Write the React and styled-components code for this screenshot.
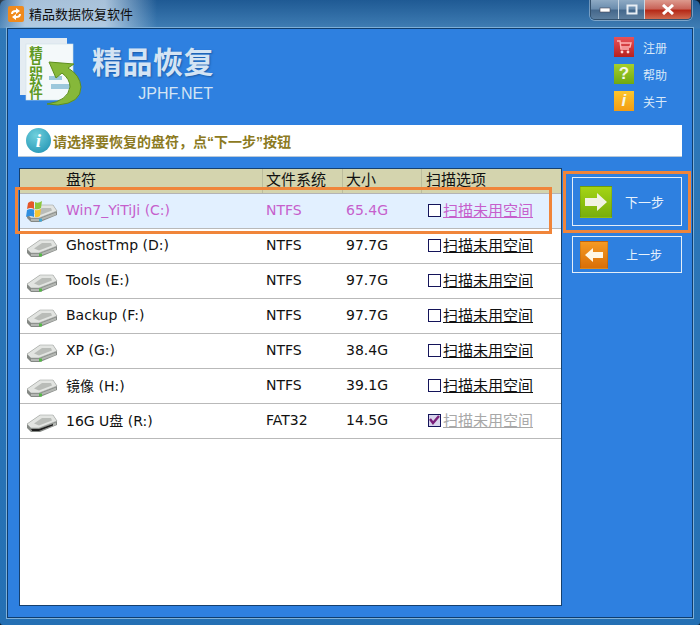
import React from 'react';
import styled, { createGlobalStyle } from 'styled-components';

const GlobalStyle = createGlobalStyle`
    html, body {
        margin: 0;
        padding: 0;
        background: #0b1c2c;
    }
    * {
        box-sizing: border-box;
    }
`;

const cjk = `"Noto Sans CJK SC", "Noto Sans", sans-serif`;
const latin = `"DejaVu Sans", "Noto Sans CJK SC", sans-serif`;

const drives = [
    { name: 'Win7_YiTiJi (C:)', fs: 'NTFS', size: '65.4G', kind: 'win', active: true },
    { name: 'GhostTmp (D:)', fs: 'NTFS', size: '97.7G' },
    { name: 'Tools (E:)', fs: 'NTFS', size: '97.7G' },
    { name: 'Backup (F:)', fs: 'NTFS', size: '97.7G' },
    { name: 'XP (G:)', fs: 'NTFS', size: '38.4G' },
    { name: '镜像 (H:)', fs: 'NTFS', size: '39.1G' },
    { name: '16G U盘 (R:)', fs: 'FAT32', size: '14.5G', kind: 'usb', disabled: true },
];

const DriveIcon = ({ kind }) => (
    <svg width="33" height="24" viewBox="0 0 33 24">
        <path d="M2 14 L15 5 L28 5 L32 11 L32 15 L15 22 L6 22 L2 18 Z" fill="#858985" />
        <path d="M2 14 L15 5 L28 5 L32 11 L14 18 L6 18 Z" fill="#e2e4e1" stroke="#a4a7a4" strokeWidth="0.6" />
        <path d="M9 13.5 L17 8 L26 8 L27 10.5 L14 15.5 Z" fill="#b9bcb8" />
        <path d="M6 19 L14 19 L31 12.5 L31 15 L14 21 L6 21 Z" fill="#b4b7b3" />
        {kind === 'usb'
            ? <path d="M6 19 L14 19 L28 14 L28 15.5 L14 21 L7 21 Z" fill="#1d1d1d" />
            : <rect x="14" y="18.5" width="3" height="3" fill={kind === 'win' ? '#3fa8d8' : '#55b848'} />}
        {kind === 'win' && (
            <g transform="translate(0 -3)">
                <path d="M3 6 Q6 3 9 5 L9 12 Q6 10 2 12 Z" fill="#e4572a" />
                <path d="M10 5 Q13 7 17 4 L16 11 Q13 13 10 12 Z" fill="#8cc63f" />
                <path d="M2 13 Q6 11 9 13 L9 20 Q5 18 1 20 Z" fill="#2f8fe0" />
                <path d="M10 13 Q13 14 16 12 L15 19 Q12 21 10 20 Z" fill="#f6c52f" />
            </g>
        )}
    </svg>
);

const Logo = () => (
    <svg width="66" height="70" viewBox="0 0 66 70">
        <rect x="2" y="1" width="47" height="57" fill="#e4ecf2" />
        <rect x="8" y="7" width="47" height="56" fill="#f4f9fa" stroke="#cfdfe8" strokeWidth="0.6" />
        <rect x="31" y="39" width="13" height="4" fill="#9cc8dc" />
        <rect x="33" y="47" width="20" height="5" fill="#9cc8dc" />
        <text x="18" y="9" writingMode="vertical-rl" fontFamily="Noto Sans CJK SC" fontWeight="700" fontSize="13.5" fill="#5f9a22">精品软件</text>
        <path d="M31 25 L56 27 L50 31 Q62 38 63 50 Q63 66 40 68 L29 67 Q50 64 52 50 Q52 42 44 36 L38 41 Z" fill="#86b83a" stroke="#5e8f1e" strokeWidth="1" />
    </svg>
);

export default () => {
    return (
        <Win>
            <GlobalStyle />
            <TitleBar>
                <TitleLeft>
                    <AppIcon>
                        <svg width="16" height="16" viewBox="0 0 16 16">
                            <path d="M3 8 Q3 4 8 4 L8 2 L12 5 L8 8 L8 6 Q5 6 5 8 Z" fill="#fff" />
                            <path d="M13 8 Q13 12 8 12 L8 14 L4 11 L8 8 L8 10 Q11 10 11 8 Z" fill="#fff" />
                        </svg>
                    </AppIcon>
                    <TitleText>精品数据恢复软件</TitleText>
                </TitleLeft>
                <WinButtons>
                    <WinBtn $w={28}>
                        <svg width="12" height="6" viewBox="0 0 12 6"><rect x="1" y="1" width="10" height="4" fill="#fff" stroke="#445" strokeWidth="0.6" /></svg>
                    </WinBtn>
                    <WinBtn $w={26}>
                        <svg width="12" height="11" viewBox="0 0 12 11"><rect x="1.5" y="1.5" width="9" height="8" fill="none" stroke="#e8eef4" strokeWidth="2" /></svg>
                    </WinBtn>
                    <WinBtn $w={46} $close>
                        <svg width="14" height="11" viewBox="0 0 14 11"><path d="M2 1 L12 10 M12 1 L2 10" stroke="#fff" strokeWidth="3" /></svg>
                    </WinBtn>
                </WinButtons>
            </TitleBar>
            <Panel>
                <Head>
                    <Logo />
                    <Brand>
                        <BrandName>精品恢复</BrandName>
                        <BrandUrl>JPHF.NET</BrandUrl>
                    </Brand>
                    <Links>
                        <LinkItem>
                            <LinkIcon $from="#e8525a" $to="#b8201f">
                                <svg width="16" height="14" viewBox="0 0 16 14"><path d="M1 1 L4 1 L5 9 L13 9 M4 3 L15 3 L14 7 L5 7" fill="none" stroke="#ffb4b4" strokeWidth="1.4" /><circle cx="6" cy="12" r="1.4" fill="#ffd9d9" /><circle cx="12" cy="12" r="1.4" fill="#ffd9d9" /></svg>
                            </LinkIcon>
                            注册
                        </LinkItem>
                        <LinkItem>
                            <LinkIcon $from="#a6d02c" $to="#6fa811">?</LinkIcon>
                            帮助
                        </LinkItem>
                        <LinkItem>
                            <LinkIcon $from="#fcc62c" $to="#f39c12"><i>i</i></LinkIcon>
                            关于
                        </LinkItem>
                    </Links>
                </Head>
                <Notice>
                    <InfoIcon>i</InfoIcon>
                    <NoticeText>请选择要恢复的盘符，点“下一步”按钮</NoticeText>
                </Notice>
                <Body>
                    <Table>
                        <HeadRow>
                            <NameCell $head>盘符</NameCell>
                            <FsCell $head>文件系统</FsCell>
                            <SizeCell $head>大小</SizeCell>
                            <ScanCell $head>扫描选项</ScanCell>
                        </HeadRow>
                        {drives.map(d => (
                            <Row key={d.name} $active={d.active}>
                                <IconCell><DriveIcon kind={d.kind} /></IconCell>
                                <NameCell>{d.name}</NameCell>
                                <FsCell>{d.fs}</FsCell>
                                <SizeCell>{d.size}</SizeCell>
                                <ScanCell>
                                    <Check $on={d.disabled}>
                                        {d.disabled && <svg width="11" height="10" viewBox="0 0 11 10"><path d="M1 4 L4 8 L10 1" fill="none" stroke="#7a1f7a" strokeWidth="2.4" /></svg>}
                                    </Check>
                                    <ScanLink $disabled={d.disabled}>扫描未用空间</ScanLink>
                                </ScanCell>
                            </Row>
                        ))}
                        <RowHighlight />
                    </Table>
                    <Side>
                        <NextWrap>
                            <StepBtn $h={49}>
                                <StepIcon $size={32} $from="#a4d414" $to="#78ae0c">
                                    <svg width="24" height="18" viewBox="0 0 24 18"><path d="M1 5 L13 5 L13 0 L23 9 L13 18 L13 13 L1 13 Z" fill="#f2f2e4" /></svg>
                                </StepIcon>
                                <StepLabel $left={13} $size={13}>下一步</StepLabel>
                            </StepBtn>
                        </NextWrap>
                        <StepBtn $h={37}>
                            <StepIcon $size={28} $from="#f59a23" $to="#d96f08">
                                <svg width="20" height="14" viewBox="0 0 20 14"><path d="M19 4 L9 4 L9 0 L1 7 L9 14 L9 10 L19 10 Z" fill="#fff7e6" /></svg>
                            </StepIcon>
                            <StepLabel $left={18} $size={12}>上一步</StepLabel>
                        </StepBtn>
                    </Side>
                </Body>
            </Panel>
        </Win>
    );
};

const Win = styled.div`
    width: 700px;
    height: 625px;
    display: flex;
    flex-direction: column;
    padding: 0 7px 7px 7px;
    border-radius: 6px 6px 3px 3px;
    background: linear-gradient(180deg, #1f5a94 0, #3f7db4 28px, #2f78b8 29px, #2470b4 100%);
    font-family: ${cjk};
`;

const TitleBar = styled.div`
    height: 28px;
    flex-shrink: 0;
    display: flex;
    justify-content: space-between;
    margin: 0 0 0 -7px;
`;

const TitleLeft = styled.div`
    display: flex;
    align-items: center;
    gap: 5px;
    padding: 0 24px 0 8px;
    height: 28px;
    background: linear-gradient(90deg, rgba(225, 236, 246, 0.15) 0, rgba(225, 236, 246, 0.7) 25px, rgba(225, 236, 246, 0.7) 105px, rgba(225, 236, 246, 0) 100%);
`;

const AppIcon = styled.div`
    width: 16px;
    height: 16px;
    display: flex;
    align-items: center;
    justify-content: center;
    border-radius: 2px;
    background: #f08a1c;
`;

const TitleText = styled.div`
    font-size: 13px;
    color: #0d0d0d;
    line-height: 16px;
`;

const WinButtons = styled.div`
    display: flex;
    height: 20px;
    margin-right: 1px;
    border: 1px solid #33506c;
    border-top: none;
    border-radius: 0 0 5px 5px;
    overflow: hidden;
    box-shadow: 0 0 0 1px rgba(255, 255, 255, 0.35);
`;

const WinBtn = styled.div`
    width: ${p => p.$w}px;
    display: flex;
    align-items: center;
    justify-content: center;
    border-right: 1px solid #c9d6e2;
    background: ${p => p.$close
        ? 'linear-gradient(180deg, #dd9a8e 0, #c9655a 45%, #b62a18 55%, #cf6a50 100%)'
        : 'linear-gradient(180deg, #8eaac4 0, #6c8eae 45%, #45688c 55%, #5d7f9f 100%)'};
    &:last-child {
        border-right: none;
    }
`;

const Panel = styled.div`
    flex: 1;
    display: flex;
    flex-direction: column;
    padding: 8px 10px 11px 10px;
    background: #2e80e0;
    border: 1px solid #0e3d6e;
    box-shadow: 0 0 0 1px #7fb0d8;
`;

const Head = styled.div`
    height: 88px;
    flex-shrink: 0;
    display: flex;
`;

const Brand = styled.div`
    display: flex;
    flex-direction: column;
    align-items: flex-end;
    margin: 5px 0 0 8px;
`;

const BrandName = styled.div`
    font-size: 30px;
    line-height: 36px;
    font-weight: 700;
    letter-spacing: 0.5px;
    color: #d4e4f4;
    text-shadow: 1px 1px 2px #1b5aa8;
`;

const BrandUrl = styled.div`
    font-family: "Liberation Sans", sans-serif;
    font-size: 16px;
    line-height: 18px;
    margin-top: 7px;
    padding-right: 1px;
    color: #d4e4f4;
`;

const Links = styled.div`
    margin-left: auto;
    display: flex;
    flex-direction: column;
    gap: 7px;
    padding: 0 15px 0 0;
`;

const LinkItem = styled.div`
    display: flex;
    align-items: center;
    gap: 9px;
    height: 20px;
    font-size: 12px;
    color: #d8e8f8;
`;

const LinkIcon = styled.div`
    width: 20px;
    height: 20px;
    display: flex;
    align-items: center;
    justify-content: center;
    font: 700 17px "Liberation Sans", sans-serif;
    color: #f4f6e8;
    background: linear-gradient(180deg, ${p => p.$from}, ${p => p.$to});
`;

const Notice = styled.div`
    height: 32px;
    flex-shrink: 0;
    display: flex;
    align-items: center;
    gap: 2px;
    padding: 0 0 0 8px;
    background: #fff;
    border-bottom: 1px solid #b8c8d8;
`;

const InfoIcon = styled.div`
    width: 25px;
    height: 25px;
    border-radius: 50%;
    display: flex;
    align-items: center;
    justify-content: center;
    font: italic 700 19px "Liberation Serif", serif;
    color: #fff;
    background: radial-gradient(circle at 40% 30%, #6fd0dc, #1a8eb0);
`;

const NoticeText = styled.div`
    font-family: "Liberation Sans", ${cjk};
    font-size: 14px;
    font-weight: 700;
    color: #8c7a22;
`;

const Body = styled.div`
    flex: 1;
    display: flex;
    margin-top: 11px;
    min-height: 0;
`;

const Table = styled.div`
    width: 543px;
    margin-left: 1px;
    position: relative;
    background: #fff;
    border: 1px solid #16406e;
    font-family: ${latin};
    font-size: 14px;
`;

const HeadRow = styled.div`
    height: 25px;
    display: flex;
    padding-left: 46px;
    color: #111;
    background: #d4d4ae;
    border-bottom: 1px solid #b4b4b4;
    font-family: ${cjk};
    font-size: 15px;
    line-height: 19px;
`;

const Row = styled.div`
    height: 35px;
    display: flex;
    align-items: center;
    padding-bottom: 2px;
    border-bottom: 1px solid #b9b9b9;
    color: ${p => p.$active ? '#c65fcc' : '#111'};
    background: ${p => p.$active ? '#e2f0ff' : '#fff'};
`;

const IconCell = styled.div`
    width: 46px;
    display: flex;
    padding: 4px 0 0 5px;
`;

const NameCell = styled.div`
    width: 196px;
    white-space: nowrap;
`;

const FsCell = styled.div`
    width: 80px;
    padding-left: 3px;
    border-left: 1px solid ${p => p.$head ? '#bcbc9c' : 'transparent'};
`;

const SizeCell = styled.div`
    width: 79px;
    padding-left: 3px;
    border-left: 1px solid ${p => p.$head ? '#bcbc9c' : 'transparent'};
`;

const ScanCell = styled.div`
    flex: 1;
    display: flex;
    align-items: ${p => p.$head ? 'flex-start' : 'center'};
    padding-left: ${p => p.$head ? '4px' : '6px'};
    border-left: 1px solid ${p => p.$head ? '#bcbc9c' : 'transparent'};
`;

const Check = styled.div`
    width: 13px;
    height: 13px;
    margin-right: 2px;
    display: flex;
    align-items: center;
    justify-content: center;
    border: 1px solid #14145a;
    background: ${p => p.$on ? '#d8d4ec' : '#fff'};
`;

const ScanLink = styled.span`
    font-family: ${cjk};
    font-size: 15px;
    line-height: 18px;
    text-decoration: underline;
    color: ${p => p.$disabled ? '#a8a8a8' : 'inherit'};
`;

const RowHighlight = styled.div`
    position: absolute;
    left: -5px;
    top: 18px;
    width: 537px;
    height: 47px;
    border: 3px solid #f0853a;
    pointer-events: none;
`;

const Side = styled.div`
    flex: 1;
    display: flex;
    flex-direction: column;
    align-items: flex-start;
    padding: 9px 0 0 10px;
    gap: 10px;
`;

const NextWrap = styled.div`
    position: relative;
    &::after {
        content: "";
        box-sizing: border-box;
        position: absolute;
        left: -9px;
        top: -6px;
        width: 128px;
        height: 62px;
        border: 3px solid #f0853a;
        pointer-events: none;
    }
`;

const StepBtn = styled.div`
    width: 110px;
    height: ${p => p.$h}px;
    display: flex;
    align-items: center;
    padding-left: 7px;
    border: 1px solid #e4eef8;
`;

const StepIcon = styled.div`
    width: ${p => p.$size}px;
    height: ${p => p.$size}px;
    display: flex;
    align-items: center;
    justify-content: center;
    background: linear-gradient(180deg, ${p => p.$from}, ${p => p.$to});
    border: 1px solid rgba(0, 0, 0, 0.1);
`;

const StepLabel = styled.div`
    margin-left: ${p => p.$left}px;
    font-size: ${p => p.$size}px;
    color: #e8f2fc;
`;
